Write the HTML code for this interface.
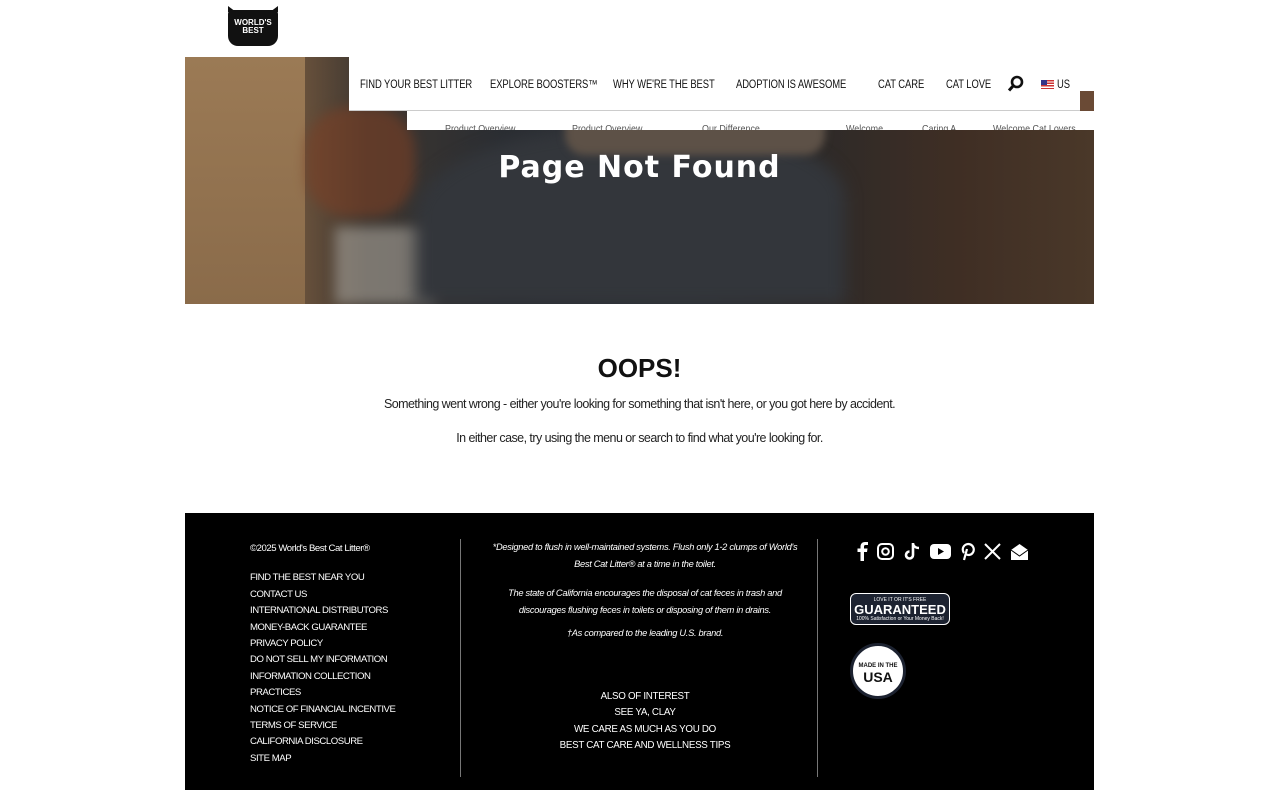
<!DOCTYPE html>
<html><head><meta charset="utf-8"><style>
*{margin:0;padding:0;box-sizing:border-box}
body{width:1280px;height:800px;background:#fff;font-family:"Liberation Sans",sans-serif;position:relative;overflow:hidden;color:#111}
.abs{position:absolute}
.hero{left:185px;top:57px;width:909px;height:247px;overflow:hidden;
background:linear-gradient(90deg,#8a6a48 0%,#7a5c40 10%,#3d3630 20%,#2a2d32 35%,#2c3036 55%,#2e2a28 70%,#3f2e24 85%,#4a3829 100%)}
.nav{left:349px;top:57px;width:731px;height:54px;background:#fff;font-size:11.5px;color:#111;border-bottom:1px solid #ccc}
.nav span{position:absolute;top:22px;white-space:nowrap;transform:scaleX(.82);transform-origin:0 0;letter-spacing:-0.1px}
.sub{left:407px;top:111px;width:687px;height:19px;background:#fff;overflow:hidden;font-size:10.5px;color:#555}
.sub span{position:absolute;top:12px;transform:scaleX(.85);transform-origin:0 0}
h1{position:absolute;left:185px;width:909px;top:150px;text-align:center;color:#fff;font-size:30px;font-weight:900;letter-spacing:1px;font-family:"DejaVu Sans",sans-serif}
.oops{left:185px;width:909px;top:353px;text-align:center;font-size:26px;font-weight:bold}
.p{left:185px;width:909px;text-align:center;font-size:12.5px;color:#222;letter-spacing:-0.55px}
.foot{left:185px;top:513px;width:909px;height:277px;background:#000;color:#fff}
.col1{left:65px;top:28px;font-size:9.6px;line-height:16.4px;letter-spacing:-0.45px}
.col2{left:300px;top:26px;width:320px;text-align:center;font-size:9.3px;font-style:italic;line-height:16.5px;letter-spacing:-0.3px}
.col3{left:300px;top:176px;width:320px;text-align:center;font-size:9.8px;line-height:16.4px;letter-spacing:-0.3px}
.vl{width:1px;background:#777;top:26px;height:238px}
</style></head><body>
<div class="abs" style="left:228px;top:10px;width:50px;height:36px;background:#111;border-radius:4px 4px 10px 10px;color:#fff;font-size:8px;font-weight:bold;text-align:center;line-height:8px;padding-top:9px">WORLD'S<br>BEST</div>
<div class="abs" style="left:228px;top:6px;width:0;height:0;border-left:8px solid #111;border-top:6px solid transparent"></div>
<div class="abs" style="left:270px;top:6px;width:0;height:0;border-right:8px solid #111;border-top:6px solid transparent"></div>
<div class="abs hero">
 <div class="abs" style="left:0;top:0;width:120px;height:247px;background:linear-gradient(180deg,#9b7a55,#8a6b4a)"></div>
 <div class="abs" style="left:120px;top:50px;width:110px;height:110px;background:#7a3f25;border-radius:40%;opacity:.6;filter:blur(6px)"></div>
 <div class="abs" style="left:150px;top:170px;width:100px;height:77px;background:#a7a39b;opacity:.6;filter:blur(6px)"></div>
 <div class="abs" style="left:230px;top:70px;width:430px;height:177px;background:#33363b;border-radius:50% 40% 0 0;filter:blur(8px)"></div>
 <div class="abs" style="left:380px;top:0;width:260px;height:98px;background:#5d5147;border-radius:0 0 20px 20px;filter:blur(4px)"></div>
</div>
<div class="abs" style="left:1080px;top:57px;width:14px;height:34px;background:#fff"></div>
<div class="abs" style="left:1080px;top:91px;width:14px;height:20px;background:#6a4a35"></div>
<div class="abs nav"><span style="left:11px">FIND YOUR BEST LITTER</span><span style="left:141px">EXPLORE BOOSTERS™</span><span style="left:264px">WHY WE'RE THE BEST</span><span style="left:387px">ADOPTION IS AWESOME</span><span style="left:529px">CAT CARE</span><span style="left:597px">CAT LOVE</span>
<svg class="abs" style="left:658px;top:18px" width="18" height="18" viewBox="0 0 18 18"><circle cx="10" cy="7" r="5" fill="none" stroke="#111" stroke-width="2.6"/><path d="M6.5 10.5 2 15.5" stroke="#111" stroke-width="3"/></svg>
<i class="abs" style="left:692px;top:23px;width:13px;height:9px;background:repeating-linear-gradient(#c33 0 1.3px,#fff 1.3px 2.6px)"><b style="position:absolute;left:0;top:0;width:6px;height:5px;background:#338"></b></i><span style="left:708px">US</span></div>
<div class="abs sub"><span style="left:38px">Product Overview</span><span style="left:165px">Product Overview</span><span style="left:295px">Our Difference</span><span style="left:439px">Welcome</span><span style="left:515px">Caring A</span><span style="left:586px">Welcome Cat Lovers</span></div>
<h1>Page Not Found</h1>
<div class="abs oops">OOPS!</div>
<div class="abs p" style="top:397px">Something went wrong - either you're looking for something that isn't here, or you got here by accident.</div>
<div class="abs p" style="top:431px">In either case, try using the menu or search to find what you're looking for.</div>
<div class="abs foot">
 <div class="abs col1">©2025 World's Best Cat Litter®<br><div style="height:13px"></div>FIND THE BEST NEAR YOU<br>CONTACT US<br>INTERNATIONAL DISTRIBUTORS<br>MONEY-BACK GUARANTEE<br>PRIVACY POLICY<br>DO NOT SELL MY INFORMATION<br>INFORMATION COLLECTION<br>PRACTICES<br>NOTICE OF FINANCIAL INCENTIVE<br>TERMS OF SERVICE<br>CALIFORNIA DISCLOSURE<br>SITE MAP</div>
 <div class="abs vl" style="left:275px"></div>
 <div class="abs vl" style="left:632px"></div>
 <div class="abs col2">*Designed to flush in well-maintained systems. Flush only 1-2 clumps of World's Best Cat Litter® at a time in the toilet.<br><div style="height:13px"></div>The state of California encourages the disposal of cat feces in trash and discourages flushing feces in toilets or disposing of them in drains.<br><div style="height:7px"></div>†As compared to the leading U.S. brand.</div>
 <div class="abs col3">ALSO OF INTEREST<br>SEE YA, CLAY<br>WE CARE AS MUCH AS YOU DO<br>BEST CAT CARE AND WELLNESS TIPS</div>
 <div class="abs" style="left:672px;top:29px;display:flex;gap:9px;align-items:center">
  <svg width="11" height="19" viewBox="0 0 11 19"><path d="M7 19V10h3l.5-3.5H7V4.5C7 3.5 7.5 3 8.5 3H11V0H8C5 0 3.5 2 3.5 4.5v2H0.5V10h3v9z" fill="#fff"/></svg>
  <svg width="17" height="17" viewBox="0 0 17 17"><rect x="1" y="1" width="15" height="15" rx="4" fill="none" stroke="#fff" stroke-width="2"/><circle cx="8.5" cy="8.5" r="3.3" fill="none" stroke="#fff" stroke-width="2"/></svg>
  <svg width="18" height="19" viewBox="0 0 18 19"><path d="M10 1v12a3.5 3.5 0 1 1-3.5-3.5" fill="none" stroke="#fff" stroke-width="2.6"/><path d="M10 2c1 3 3 4 6 4" fill="none" stroke="#fff" stroke-width="2.4"/></svg>
  <svg width="21" height="15" viewBox="0 0 21 15"><rect width="21" height="15" rx="4" fill="#fff"/><path d="M8 4l6 3.5-6 3.5z" fill="#000"/></svg>
  <svg width="15" height="19" viewBox="0 0 15 19"><path d="M4 18l3-11M4 11A5.5 5.5 0 1 1 9 13c-2 0-2.5-1-2.5-1" fill="none" stroke="#fff" stroke-width="2.2"/></svg>
  <svg width="17" height="17" viewBox="0 0 17 17"><path d="M1 1l15 15M16 1L1 16" stroke="#fff" stroke-width="2"/></svg>
  <svg width="19" height="18" viewBox="0 0 19 18"><path d="M1 7l8.5-6L18 7v10H1z" fill="#fff"/><path d="M1 7l8.5 6L18 7" fill="none" stroke="#000" stroke-width="1"/></svg>
 </div>
 <div class="abs" style="left:665px;top:80px;width:100px;height:32px;border:1.5px solid #fff;border-radius:6px;background:#1c2230;text-align:center;font-size:5px;line-height:6px;padding-top:3px">LOVE IT OR IT'S FREE<div style="font-size:13px;font-weight:bold;line-height:13px">GUARANTEED</div>100% Satisfaction or Your Money Back!</div>
 <div class="abs" style="left:665px;top:130px;width:56px;height:56px;border-radius:50%;background:#fff;border:3px solid #1c2230;text-align:center;color:#111;font-size:6px;font-weight:bold;padding-top:17px;line-height:7px">MADE IN THE<div style="font-size:14px;line-height:14px;font-weight:900">USA</div></div>
</div>
</body></html>
